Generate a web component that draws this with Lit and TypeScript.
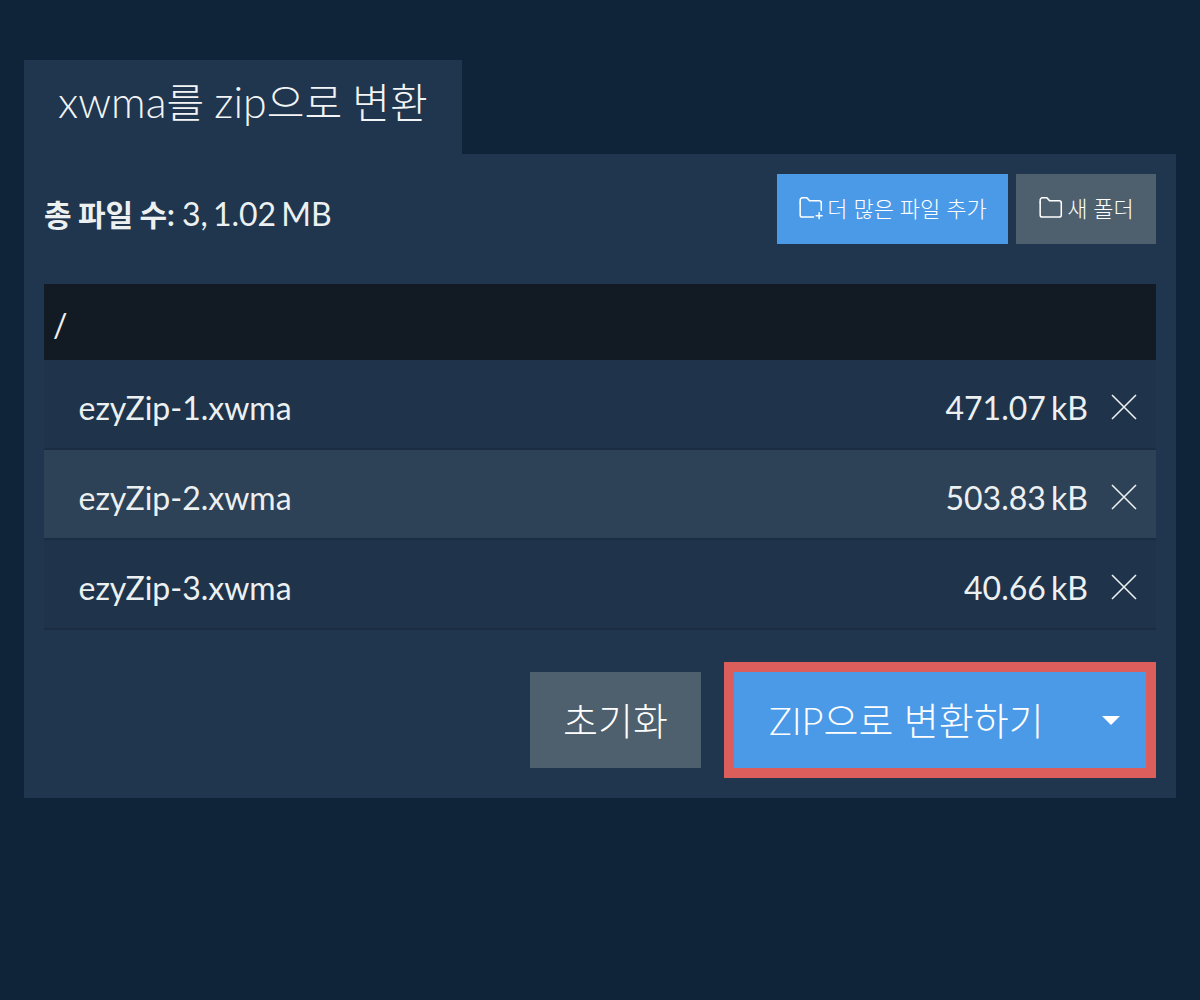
import { LitElement, html, css, svg } from "lit";
import { customElement } from "lit/decorators.js";

const files = [
  { name: "ezyZip-1.xwma", size: "471.07 kB", hover: false },
  { name: "ezyZip-2.xwma", size: "503.83 kB", hover: true },
  { name: "ezyZip-3.xwma", size: "40.66 kB", hover: false },
];

const folderTop = svg`<path d="M2 6.2 V3.6 A2 2 0 0 1 4 1.6 H8.2 L10.6 4.2 H19.5 A2 2 0 0 1 21.5 6.2"/>`;

@customElement("app-root")
export class AppRoot extends LitElement {
  static styles = css`
    :host {
      display: block;
      min-height: 1000px;
      background: #0f2439;
      font-family: Lato, "Noto Sans CJK KR", sans-serif;
      color: #ecf0f1;
      box-sizing: border-box;
      padding: 60px 24px 0;
    }
    .tab {
      width: 438px;
      height: 94px;
      box-sizing: border-box;
      background: #20364e;
      padding-left: 34px;
      padding-bottom: 15px;
      display: flex;
      align-items: center;
      font-size: 41px;
      word-spacing: -1px;
      font-weight: 300;
      color: #f2f4f5;
      white-space: nowrap;
    }
    .tab div span { font-size: 43px; }
    .panel {
      background: #20364e;
      height: 644px;
      box-sizing: border-box;
      padding: 20px;
    }
    .top {
      display: flex;
      align-items: center;
      height: 70px;
    }
    .total {
      flex: 1;
      font-size: 32px;
      word-spacing: -3px;
      white-space: nowrap;
      padding-top: 8px;
    }
    .total b {
      font-weight: 700;
      font-size: 30px;
      word-spacing: -1px;
      margin-right: 2px;
    }
    .btn {
      display: flex;
      align-items: center;
      justify-content: center;
      box-sizing: border-box;
      color: #fff;
      font-weight: 300;
      white-space: nowrap;
    }
    .small {
      height: 70px;
      font-size: 22px;
      gap: 3px;
      padding-bottom: 4px;
    }
    .add { width: 231px; background: #4b9ae8; margin-right: 8px; }
    .folder { width: 140px; background: #4e5f6e; }
    .small svg {
      width: 26px;
      height: 24px;
      fill: none;
      stroke: currentColor;
      stroke-width: 1.4;
      stroke-linecap: round;
      stroke-linejoin: round;
      margin-top: 2px;
    }
    .path {
      margin-top: 40px;
      height: 76px;
      background: #121b23;
      display: flex;
      align-items: center;
      padding-left: 9px;
      padding-top: 4px;
      box-sizing: border-box;
      font-size: 32px;
    }
    .row {
      height: 90px;
      box-sizing: border-box;
      background: #1f344b;
      border-bottom: 2px solid #1b2d42;
      display: flex;
      align-items: center;
      padding: 0 19px 0 34.5px;
      font-size: 32px;
    }
    .row.hover { background: #2d4157; }
    .name { flex: 1; }
    .label { padding-top: 7px; }
    .size { word-spacing: -3px; }
    .x {
      width: 26px;
      height: 26px;
      margin-left: 23px;
      stroke: #ecf0f1;
      stroke-width: 1.6;
      fill: none;
      margin-top: 5px;
    }
    .actions {
      display: flex;
      justify-content: flex-end;
      align-items: center;
      margin-top: 32px;
    }
    .reset {
      width: 171px;
      height: 96px;
      background: #4e5f6e;
      font-size: 38px;
      margin-right: 23px;
      padding-bottom: 4px;
    }
    .convert {
      width: 432px;
      height: 116px;
      box-sizing: border-box;
      border: 10px solid #dc5e5c;
      background: #4b9ae8;
      font-size: 38px;
      justify-content: flex-start;
      padding-left: 35px;
    }
    .convert span { flex: 1; padding-bottom: 4px; }
    .caret {
      width: 0;
      height: 0;
      border-left: 9px solid transparent;
      border-right: 9px solid transparent;
      border-top: 9px solid #fff;
      margin-right: 26px;
    }
  `;

  render() {
    return html`
      <div class="tab"><div><span>xwma</span>를 <span>zip</span>으로 변환</div></div>
      <div class="panel">
        <div class="top">
          <div class="total"><b>총 파일 수:</b> 3, 1.02 MB</div>
          <div class="btn small add">
            <svg viewBox="0 0 24 22">
              ${folderTop}
              <path d="M2 6 V17.4 A2 2 0 0 0 4 19.4 H14.4 M21.5 6 V13"/>
              <path d="M19.5 15.4 V20.8 M16.8 18.1 H22.2"/>
            </svg>
            더 많은 파일 추가
          </div>
          <div class="btn small folder">
            <svg viewBox="0 0 24 22">
              ${folderTop}
              <path d="M2 6 V17.4 A2 2 0 0 0 4 19.4 H19.5 A2 2 0 0 0 21.5 17.4 V6"/>
            </svg>
            새 폴더
          </div>
        </div>
        <div class="path">/</div>
        ${files.map(
          (f) => html`
            <div class="row ${f.hover ? "hover" : ""}">
              <div class="name label">${f.name}</div>
              <div class="label size">${f.size}</div>
              <svg class="x" viewBox="0 0 26 26"><path d="M1 1 L25 25 M25 1 L1 25"/></svg>
            </div>
          `
        )}
        <div class="actions">
          <div class="btn reset">초기화</div>
          <div class="btn convert"><span>ZIP으로 변환하기</span><i class="caret"></i></div>
        </div>
      </div>
    `;
  }
}
